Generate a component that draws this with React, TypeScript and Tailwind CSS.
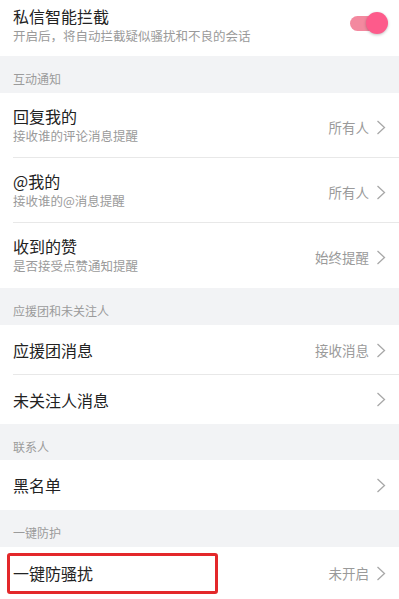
import React from "react";

const font = { fontFamily: '"Noto Sans CJK SC", "Noto Sans", sans-serif' };

function Chevron() {
  return (
    <svg width="10" height="15" viewBox="0 0 10 15" className="shrink-0">
      <path d="M1.5 1 L8.5 7.5 L1.5 14" fill="none" stroke="#a8a8a8" strokeWidth="1.3" />
    </svg>
  );
}

function Header({ text, h }: { text: string; h: string }) {
  return (
    <div className={`${h} bg-[#f2f3f5] px-[13px] pt-[15px] text-[12px] leading-[16px] text-[#9b9b9b]`}>{text}</div>
  );
}

function Row2({ title, sub, value, divider }: { title: string; sub: string; value: string; divider?: boolean }) {
  return (
    <div className="relative h-[65px] bg-white flex items-center pl-[13px] pr-[13px]">
      <div className="flex-1 flex flex-col">
        <div className="text-[16px] leading-[20px] text-[#222]">{title}</div>
        <div className="text-[12.5px] leading-[18px] text-[#9a9a9a] mt-[1px]">{sub}</div>
      </div>
      <div className="flex items-center gap-[7px] mt-[3px]">
        <span className="text-[13.5px] text-[#9a9a9a]">{value}</span>
        <Chevron />
      </div>
      {divider && <div className="absolute left-[13px] right-0 bottom-0 h-px bg-[#e8e8e8]" />}
    </div>
  );
}

function Row1({ title, value, divider, h = "h-[50px]" }: { title: string; value?: string; divider?: boolean; h?: string }) {
  return (
    <div className={`relative ${h} bg-white flex items-center pl-[13px] pr-[13px]`}>
      <div className="flex-1 text-[16px] leading-[20px] text-[#222]">{title}</div>
      <div className="flex items-center gap-[7px]">
        {value && <span className="text-[13.5px] text-[#9a9a9a]">{value}</span>}
        <Chevron />
      </div>
      {divider && <div className="absolute left-[13px] right-0 bottom-0 h-px bg-[#e8e8e8]" />}
    </div>
  );
}

export default function App() {
  return (
    <div className="w-[399px] h-[599px] overflow-hidden bg-white" style={font}>
      <div className="h-[56px] bg-white flex items-start pt-[6px] pl-[13px] pr-[11px]">
        <div className="flex-1 flex flex-col">
          <div className="text-[16px] leading-[20px] text-[#222]">私信智能拦截</div>
          <div className="text-[12.5px] leading-[18px] text-[#9a9a9a] mt-[1px]">开启后，将自动拦截疑似骚扰和不良的会话</div>
        </div>
        <div className="relative w-[38px] h-[24px] mt-[6px]">
          <div className="absolute left-0 top-[4px] w-[30px] h-[15px] rounded-full bg-[#f3899f]" />
          <div className="absolute right-0 top-0 w-[22px] h-[22px] rounded-full bg-[#fd5b8b] shadow-[0_1px_3px_rgba(0,0,0,0.25)]" />
        </div>
      </div>
      <Header text="互动通知" h="h-[37px]" />
      <Row2 title="回复我的" sub="接收谁的评论消息提醒" value="所有人" divider />
      <Row2 title="@我的" sub="接收谁的@消息提醒" value="所有人" divider />
      <Row2 title="收到的赞" sub="是否接受点赞通知提醒" value="始终提醒" />
      <Header text="应援团和未关注人" h="h-[37px]" />
      <Row1 title="应援团消息" value="接收消息" divider />
      <Row1 title="未关注人消息" h="h-[49px]" />
      <Header text="联系人" h="h-[36px]" />
      <Row1 title="黑名单" />
      <Header text="一键防护" h="h-[37px]" />
      <div className="relative h-[52px] bg-white flex items-center pl-[13px] pr-[13px]">
        <div className="flex-1 text-[16px] leading-[20px] text-[#222]">一键防骚扰</div>
        <div className="flex items-center gap-[7px]">
          <span className="text-[13.5px] text-[#9a9a9a]">未开启</span>
          <Chevron />
        </div>
        <div className="absolute left-[7px] top-[6px] w-[211px] h-[41px] border-[3px] border-[#e3282a] rounded-[3px]" />
      </div>
    </div>
  );
}
